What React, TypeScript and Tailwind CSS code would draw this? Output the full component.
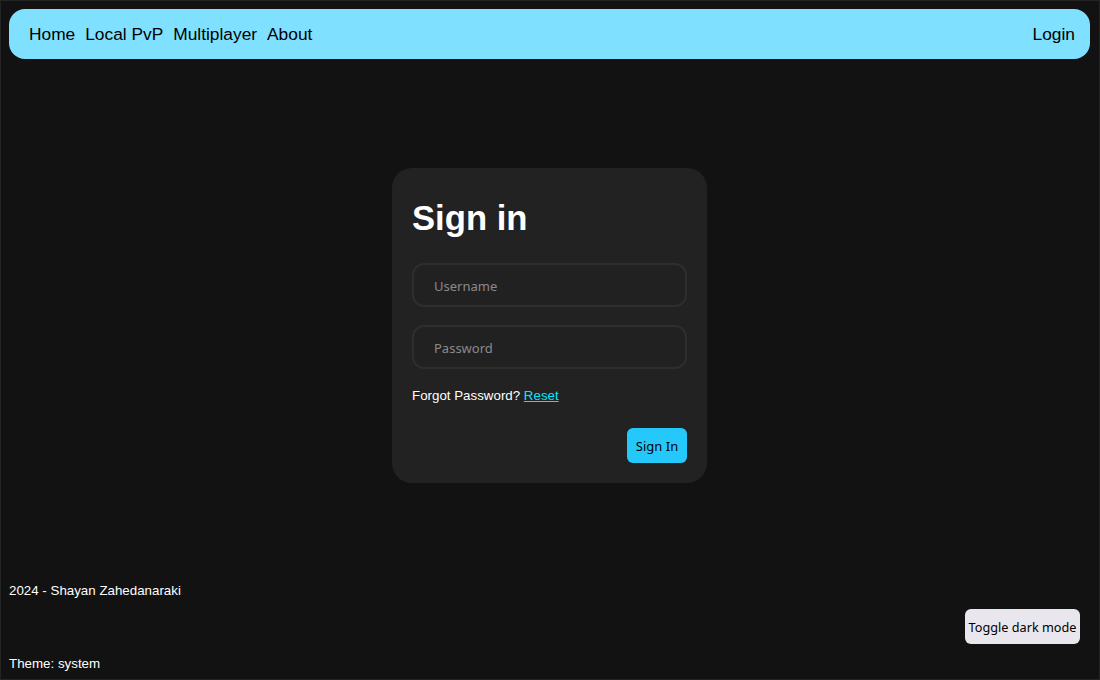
import { useState } from 'react';

const sans = { fontFamily: '"Liberation Sans", Arial, sans-serif' };
const ui = { fontFamily: '"Noto Sans", "Open Sans", sans-serif' };

export default function App() {
  const [username, setUsername] = useState('');
  const [password, setPassword] = useState('');

  return (
    <div
      className="h-[680px] flex flex-col bg-[#121212] border border-[#242424] pl-2 pr-[9px] pt-2 pb-2 text-white"
      style={sans}
    >
      <nav className="h-[50px] shrink-0 flex items-center justify-between rounded-[16px] bg-[#80e0ff] pl-5 pr-[15px] pt-[1px] text-[17.33px] text-black">
        <div className="flex items-center gap-[10px]">
          <a href="#">Home</a>
          <a href="#">Local PvP</a>
          <a href="#">Multiplayer</a>
          <a href="#">About</a>
        </div>
        <a href="#">Login</a>
      </nav>

      <main className="flex justify-center pt-[109px]">
        <form
          className="w-[315px] h-[315px] rounded-[20px] bg-[#222222] p-5 flex flex-col"
          onSubmit={(e) => e.preventDefault()}
        >
          <h1 className="text-[34.67px] font-bold leading-none mt-[13px]">Sign in</h1>

          <input
            value={username}
            onChange={(e) => setUsername(e.target.value)}
            placeholder="Username"
            className="mt-[27px] h-[44px] w-full rounded-[12px] border-2 border-[#2e2e2e] bg-[#212121] px-5 pt-[2px] text-[13px] text-white placeholder:text-[#8a8a8a] outline-none"
            style={ui}
          />
          <input
            type="password"
            value={password}
            onChange={(e) => setPassword(e.target.value)}
            placeholder="Password"
            className="mt-[18px] h-[44px] w-full rounded-[12px] border-2 border-[#2e2e2e] bg-[#212121] px-5 pt-[2px] text-[13px] text-white placeholder:text-[#8a8a8a] outline-none"
            style={ui}
          />

          <p className="mt-[19px] text-[13.33px] leading-[15px]">
            Forgot Password?{' '}
            <a href="#" className="text-[#00e8ff] underline">
              Reset
            </a>
          </p>

          <div className="mt-auto flex justify-end">
            <button
              type="submit"
              className="h-[35px] w-[60px] rounded-[6px] bg-[#24c8fb] pt-[2px] text-[13px] text-black"
              style={ui}
            >
              Sign In
            </button>
          </div>
        </form>
      </main>

      <footer className="mt-auto flex flex-col text-[13.33px] leading-[15px]">
        <p>2024 - Shayan Zahedanaraki</p>
        <div className="flex justify-end mt-[11px] mr-[10px]">
          <button
            className="h-[35px] w-[115px] rounded-[6px] bg-[#e9e7ed] pt-[2px] text-[12.7px] text-black"
            style={ui}
          >
            Toggle dark mode
          </button>
        </div>
        <p className="mt-[12px]">Theme: system</p>
      </footer>
    </div>
  );
}
